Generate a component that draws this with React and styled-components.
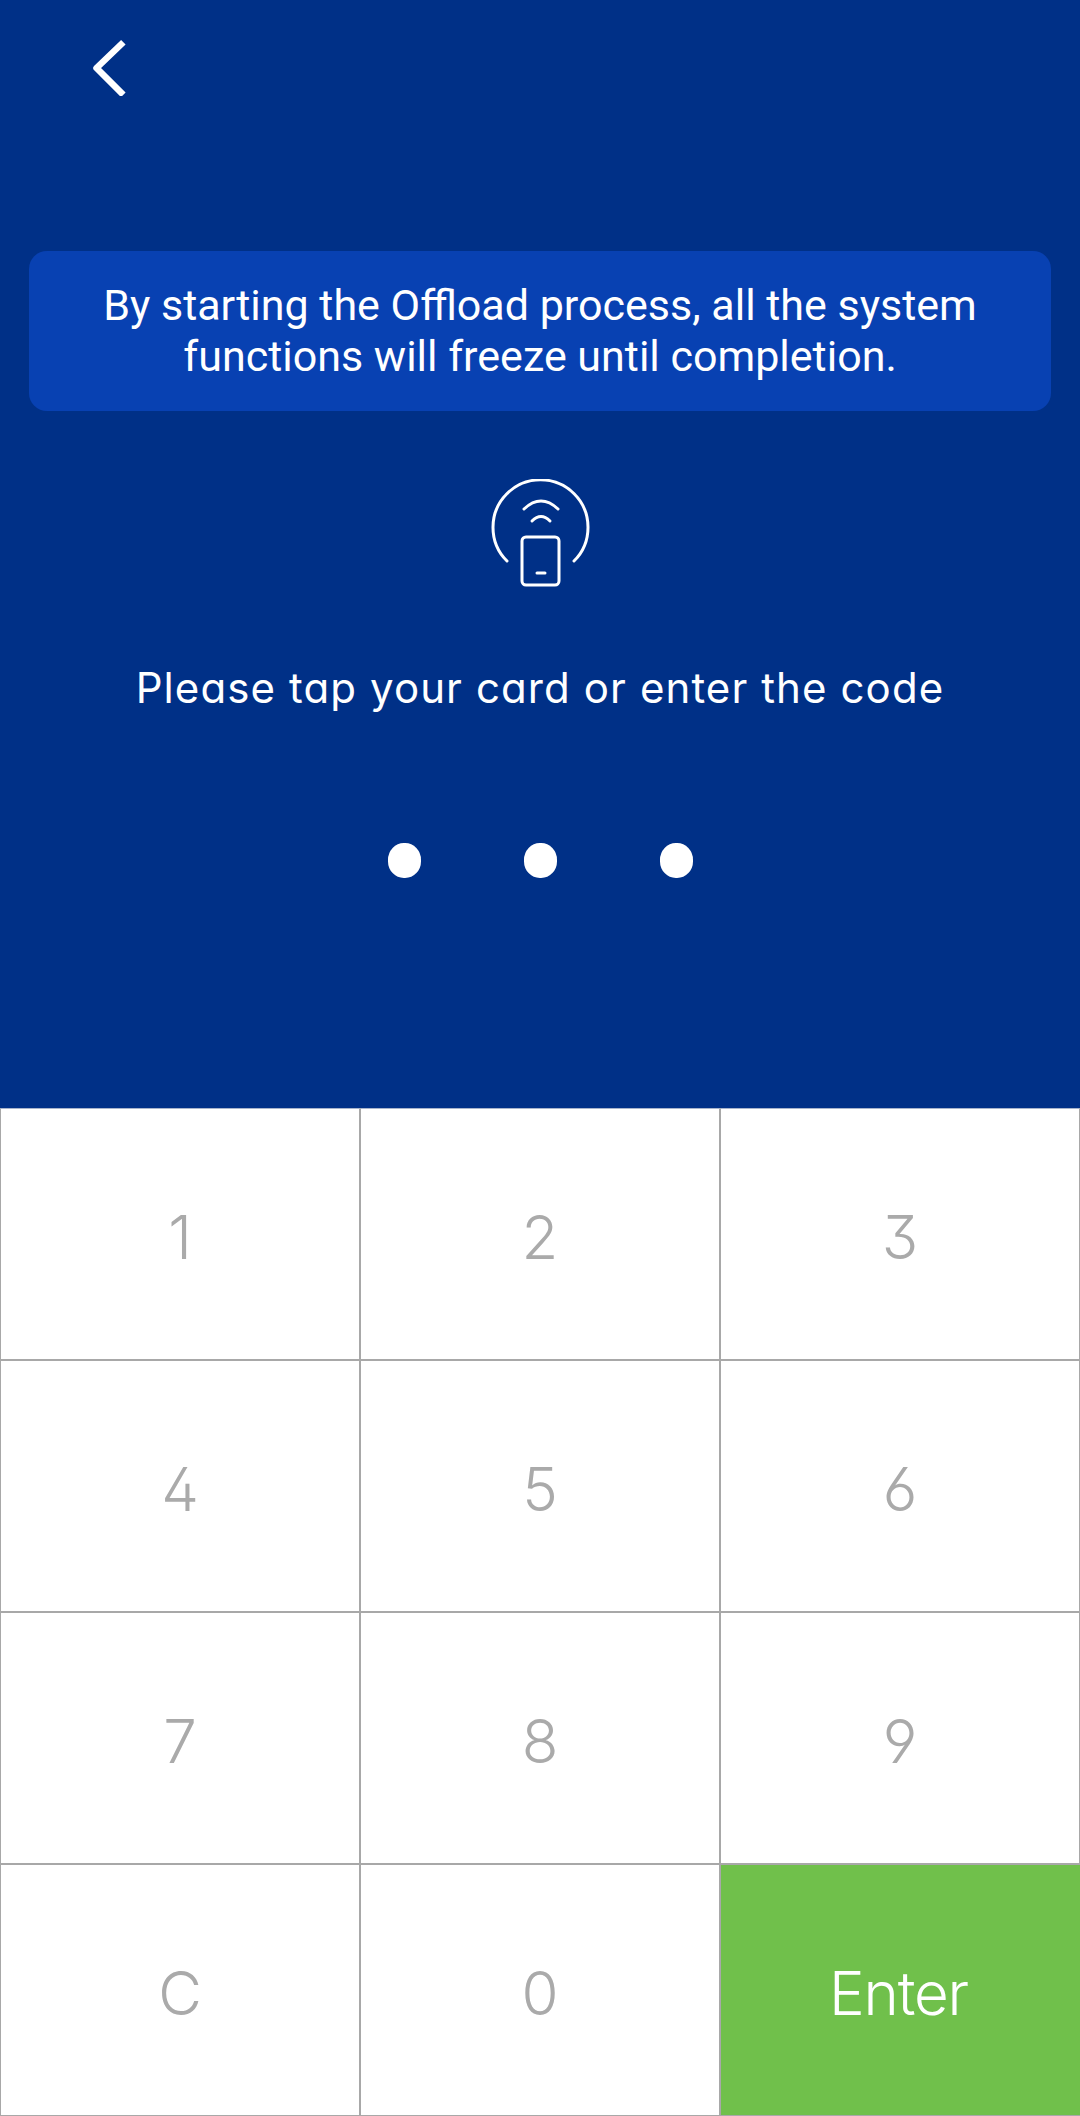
import React from "react";
import styled, { createGlobalStyle } from "styled-components";

const Global = createGlobalStyle`
  html, body { margin: 0; padding: 0; background: #fff; }
  * { box-sizing: border-box; }
`;
const Screen = styled.div`
  width: 1080px;
  height: 2116px;
  display: flex;
  flex-direction: column;
  overflow: hidden;
`;
const Panel = styled.section`
  height: 1108px;
  background: #003087;
  display: flex;
  flex-direction: column;
  align-items: center;
  padding-top: 36px;
`;
const TopBar = styled.div`
  align-self: stretch;
  height: 215px;
  padding-left: 88px;
`;
const Banner = styled.div`
  width: 1022px;
  height: 160px;
  background: #0841b2;
  border-radius: 18px;
  color: #fff;
  font-family: Roboto, sans-serif;
  font-size: 43px;
  line-height: 51px;
  text-align: center;
  padding-top: 29px;
`;
const TapIcon = styled.svg`
  display: block;
  margin-top: 68px;
  margin-left: 2px;
`;
const Prompt = styled.p`
  margin: 75px 0 0;
  color: #fff;
  font-family: Inter, sans-serif;
  font-feature-settings: "cv11" 1;
  font-weight: 370;
  font-size: 42px;
  line-height: 48px;
  letter-spacing: 1.1px;
  white-space: nowrap;
`;
const Dots = styled.div`
  display: flex;
  gap: 103px;
  margin-top: 131px;
`;
const Dot = styled.span`
  width: 33px;
  height: 35px;
  border-radius: 48%;
  background: #fff;
`;
const Pad = styled.div`
  flex: 1;
  display: grid;
  grid-template-columns: 361px 360px 359px;
  grid-template-rows: 253px 252px 252px 251px;
`;
const Key = styled.div`
  display: flex;
  align-items: center;
  justify-content: center;
  padding-top: 6px;
  padding-right: ${(p) => (p.$primary ? "4px" : "0")};
  font-family: Inter, sans-serif;
  font-feature-settings: "cv02" 1, "cv03" 1, "cv04" 1, "cv09" 1;
  font-weight: 300;
  font-size: 60px;
  letter-spacing: ${(p) => (p.$primary ? "-1.2px" : "0")};
  color: ${(p) => (p.$primary ? "#fff" : "#aaaaaa")};
  background: ${(p) => (p.$primary ? "#70c04b" : "#fff")};
  border-right: 2px solid #a8a8a8;
  border-bottom: 2px solid #a8a8a8;
  &:nth-child(3n + 1) { border-left: 1px solid #a8a8a8; }
  &:nth-child(3n) { border-right-width: 1px; }
  &:nth-child(-n + 3) { border-top: 1px solid #a8b4cc; }
  &:nth-last-child(-n + 3) { border-bottom-width: 1px; }
  &:last-child { border-right: none; }
`;

const keys = ["1", "2", "3", "4", "5", "6", "7", "8", "9", "C", "0", "Enter"];

export default function App() {
  return (
    <Screen>
      <Global />
      <Panel>
        <TopBar>
          <svg width="40" height="60" viewBox="0 0 40 60" fill="none">
            <path d="M33 8.5 L8.5 32 L33 56.5" stroke="#fff" strokeWidth="6.5" strokeLinecap="square" strokeLinejoin="round" />
          </svg>
        </TopBar>
        <Banner>
          By starting the Offload process, all the system
          <br />
          functions will freeze until completion.
        </Banner>
        <TapIcon width="100" height="110" viewBox="0 0 100 110" fill="none" stroke="#fff" strokeWidth="3" strokeLinecap="round">
          <path d="M16 82 A47.5 47.5 0 1 1 83 82" />
          <path d="M33 30 Q50 14 67 30" />
          <path d="M41 42 Q50 33 59 42" />
          <rect x="31" y="58" width="37" height="48" rx="4" />
          <path d="M46 94 H54" strokeWidth="3" />
        </TapIcon>
        <Prompt>Please tap your card or enter the code</Prompt>
        <Dots>
          <Dot />
          <Dot />
          <Dot />
        </Dots>
      </Panel>
      <Pad>
        {keys.map((k) => (
          <Key key={k} $primary={k === "Enter"}>
            {k}
          </Key>
        ))}
      </Pad>
    </Screen>
  );
}
